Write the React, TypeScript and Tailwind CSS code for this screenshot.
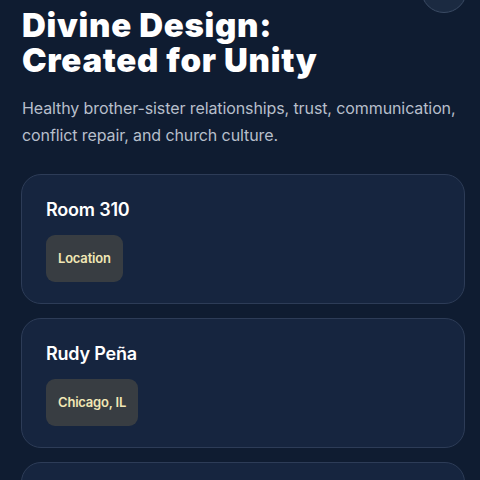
const sessions = [
  { title: "Room 310", tag: "Location" },
  { title: "Rudy Peña", tag: "Chicago, IL" },
  { title: "Small Groups", tag: "Discussion" },
];

function SessionCard({ title, tag }: { title: string; tag: string }) {
  return (
    <div className="rounded-[20px] border border-[#2d3c57] bg-[#16253f] px-6 pt-[23px] pb-[21px]">
      <h3 className="text-[18px] font-semibold leading-[24px] tracking-[-0.2px] text-white">{title}</h3>
      <div className="mt-[13px] inline-flex h-[47px] items-center rounded-[9px] bg-[#383d42] px-3">
        <span className="text-[13px] font-semibold tracking-[-0.2px] text-[#f1e7b5]">{tag}</span>
      </div>
    </div>
  );
}

export default function App() {
  return (
    <div
      className="relative h-[480px] w-[480px] overflow-hidden bg-[#0f1c31]"
      style={{ fontFamily: "Inter, 'Noto Sans', sans-serif" }}
    >
      {/* round button peeking from above */}
      <button className="absolute -top-[33px] left-[421px] h-[46px] w-[46px] rounded-full border border-[#3a4a63] bg-[#1b2a41]" />

      <div className="pl-[21px] pr-[15px] pt-[8px]">
        <h1 className="pl-px text-[33px] font-black leading-[35px] tracking-[0.7px] text-white">
          Divine Design:
          <br />
          Created for Unity
        </h1>
        <p className="mt-[17px] pl-px text-[16px] leading-[27px] tracking-[-0.1px] text-[#b7bfcb]">
          Healthy brother-sister relationships, trust, communication, conflict repair, and church culture.
        </p>

        <div className="mt-[25px] flex flex-col gap-[14px]">
          {sessions.map((s) => (
            <SessionCard key={s.title} title={s.title} tag={s.tag} />
          ))}
        </div>
      </div>
    </div>
  );
}
